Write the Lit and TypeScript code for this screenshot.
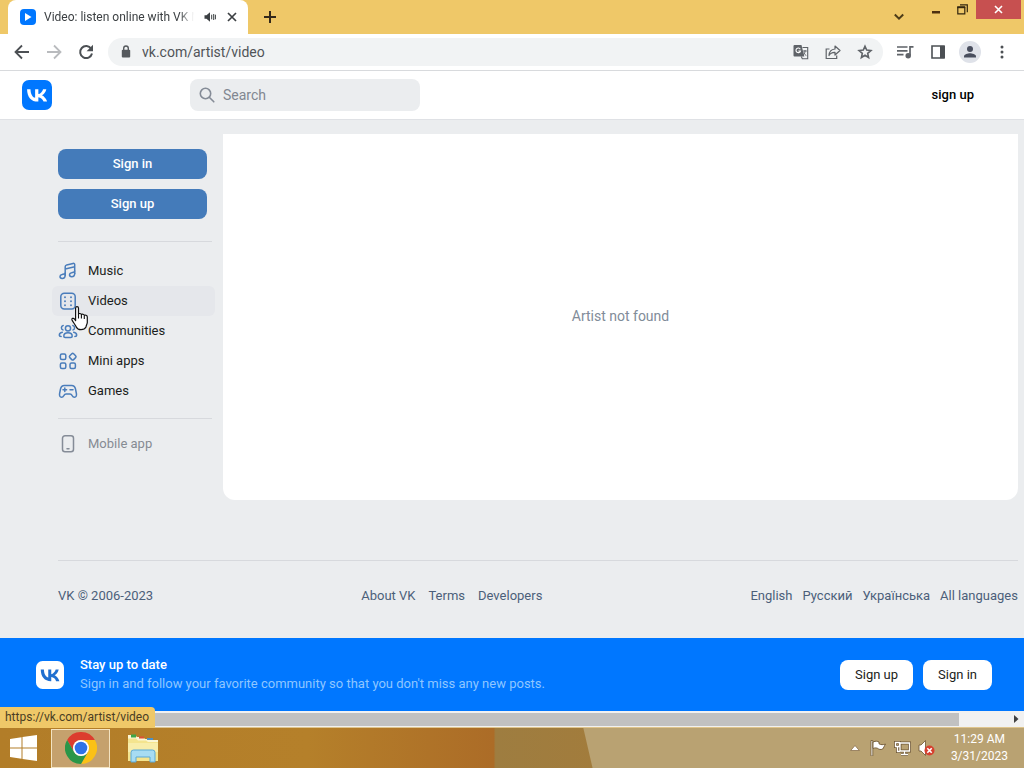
import { LitElement, html, css, svg } from "lit";
import { customElement } from "lit/decorators.js";

const VK_PATH =
  "M12.77 17.29c-5.47 0-8.59-3.75-8.72-9.99h2.74c.09 4.58 2.11 6.52 3.71 6.92V7.3h2.58v3.95c1.58-.17 3.24-1.97 3.8-3.95h2.58c-.43 2.44-2.23 4.24-3.51 4.98 1.28.6 3.33 2.17 4.11 5.01h-2.84c-.61-1.9-2.13-3.37-4.14-3.57v3.57h-.31z";

const vkLogo = (size: number, bg: string, fg: string) => html`
  <svg width=${size} height=${size} viewBox="0 0 24 24" aria-hidden="true">
    <rect width="24" height="24" rx="5.6" fill=${bg}></rect>
    <path d=${VK_PATH} fill=${fg}></path>
  </svg>`;

const base = css`
  *, *::before, *::after { box-sizing: border-box; }
  svg { display: block; flex: none; }
  button { font: inherit; color: inherit; border: 0; padding: 0; margin: 0; background: none; cursor: pointer; }
  a { color: inherit; text-decoration: none; }
`;

@customElement("browser-chrome")
export class BrowserChrome extends LitElement {
  static styles = [base, css`
    :host { display: block; font-family: Roboto, "Noto Sans", sans-serif; color: #3c4043; }
    .tabs { display: flex; height: 34px; background: #efc868; padding-left: 8px; }
    .tab { display: flex; align-items: center; width: 240px; background: #fff; border-radius: 8px 8px 0 0; padding: 0 8px 0 12px; font-size: 12px; }
    .title { flex: 1; min-width: 0; margin: 0 10px 0 8px; overflow: hidden; white-space: nowrap; -webkit-mask-image: linear-gradient(90deg, #000 90%, transparent); mask-image: linear-gradient(90deg, #000 90%, transparent); }
    .close { margin-left: 8px; }
    .new { padding: 0 16px; display: flex; align-items: center; }
    .window { margin-left: auto; display: flex; align-items: flex-start; }
    .window button { display: flex; align-items: center; justify-content: center; height: 19px; width: 26px; }
    .window .list { height: 34px; width: 32px; margin-right: 8px; }
    .window .x { width: 45px; background: #c75050; margin-right: 3px; margin-left: 1px; }
    .bar { display: flex; align-items: center; height: 37px; background: #fff; border-bottom: 1px solid #d8dadd; padding: 0 14px; color: #5f6368; }
    .bar > button { margin-right: 16px; }
    .omni { flex: 1; display: flex; align-items: center; height: 28px; border-radius: 14px; background: #f1f3f4; padding: 0 10px; margin: 0 14px 0 -2px; }
    .url { flex: 1; min-width: 0; border: 0; outline: 0; background: none; font: 14px/20px Roboto, sans-serif; color: #505458; margin-left: 8px; padding: 0; }
    .omni button { margin-left: 16px; }
    .bar > .ext { margin: 0 0 0 16px; }
    .bar > .ext.first { margin-left: 0; }
    .bar > .me { margin-left: 13px; }
    .bar > .dots { margin-left: 13px; }
  `];

  render() {
    return html`
      <div class="tabs">
        <div class="tab">
          <svg width="16" height="16" viewBox="0 0 16 16"><rect width="16" height="16" rx="4" fill="#0077ff"/><path d="M5 4v8l6.500-4z" fill="#fff"/></svg>
          <span class="title">Video: listen online with VK Music</span>
          <svg width="12" height="12" viewBox="0 0 12 12" fill="#3c4043"><path d="M0.500 4.200h2L6 1.200v9.600L2.500 7.800h-2z"/><path d="M7.700 3.700v4.600M9.700 3v6M11.400 3.700v4.600" stroke="#3c4043"/></svg>
          <button class="close" aria-label="Close tab"><svg width="16" height="16" viewBox="0 0 16 16" stroke="#3c4043" stroke-width="1.700"><path d="M4 4l8 8M12 4l-8 8"/></svg></button>
        </div>
        <button class="new" aria-label="New tab"><svg width="12" height="12" viewBox="0 0 12 12" stroke="#33291a" stroke-width="2"><path d="M6 0v12M0 6h12"/></svg></button>
        <div class="window">
          <button class="list" aria-label="Search tabs"><svg width="10" height="8" viewBox="0 0 10 8" fill="none" stroke="#4d3c18" stroke-width="2"><path d="M.8 1.500L5 5.700l4.200-4.200"/></svg></button>
          <button aria-label="Minimize"><svg width="8" height="14" viewBox="0 0 8 14"><path d="M0 8h8v2.500H0z" fill="#4d3011"/></svg></button>
          <button aria-label="Restore"><svg width="11" height="11" viewBox="0 0 11 11" fill="none" stroke="#33260f" stroke-width="1.200"><path d="M.8 3.500h7v6.300h-7z"/><path d="M.2 3.200h8" stroke-width="2"/><path d="M3 .9h7.300v7.300"/></svg></button>
          <button class="x" aria-label="Close"><svg width="9" height="9" viewBox="0 0 9 9" stroke="#fff" stroke-width="1.600"><path d="M1 1l7 7M8 1L1 8"/></svg></button>
        </div>
      </div>
      <div class="bar">
        <button aria-label="Back"><svg width="16" height="16" viewBox="0 0 16 16" fill="none" stroke="#4c5054" stroke-width="1.800"><path d="M15 8H2M8 1.500L1.500 8 8 14.500"/></svg></button>
        <button aria-label="Forward"><svg width="16" height="16" viewBox="0 0 16 16" fill="none" stroke="#b9bbbe" stroke-width="1.800"><path d="M1 8h13M8 1.500L14.500 8 8 14.500"/></svg></button>
        <button aria-label="Reload"><svg width="16" height="16" viewBox="0 0 16 16" fill="none" stroke="#4c5054" stroke-width="2"><path d="M13.200 4.800A6 6 0 1 0 14 9.500"/><path d="M15 .8v6.400H8.600z" fill="#4c5054" stroke="none"/></svg></button>
        <div class="omni">
          <svg width="16" height="16" viewBox="0 0 16 16"><rect x="3.800" y="5.800" width="8.400" height="7.600" rx="1" fill="#55595d"/><path d="M5.700 6.500V4.300a2.300 2.300 0 0 1 4.600 0v2.200" fill="none" stroke="#55595d" stroke-width="1.400"/></svg>
          <input class="url" aria-label="Address" .value=${"vk.com/artist/video"} />
          <button aria-label="Translate"><svg width="16" height="16" viewBox="0 0 16 16"><path d="M1.500 1h7l2.800 11.500H1.500A1 1 0 0 1 .5 11.500V2a1 1 0 0 1 1-1z" fill="#5f6368"/><path d="M9.500 3.500h5.200v11.300H9.300l-1-2.300" fill="none" stroke="#5f6368" stroke-width="1.100"/><path d="M7.300 5.200A2.300 2.300 0 1 0 7.500 7H5.300" fill="none" stroke="#fff" stroke-width="1.100"/><path d="M9.800 7h4M12 6v1c0 2-1 3.500-2 4M10.800 8.500c.5 1.500 1.500 2.500 2.500 3" fill="none" stroke="#5f6368"/></svg></button>
          <button aria-label="Share"><svg width="16" height="16" viewBox="0 0 16 16" fill="none" stroke="#5f6368" stroke-width="1.200"><path d="M4.500 5H1.200v9.500h10.500v-3"/><path d="M10 5V2l5 4.500-5 4.500V8.300C7 8.200 5 9.500 4 11.500 4.200 7.500 6.500 5.300 10 5z" stroke-linejoin="round"/></svg></button>
          <button aria-label="Bookmark"><svg width="16" height="16" viewBox="0 0 16 16" fill="none" stroke="#5f6368" stroke-width="1.600"><path d="M8 2.200l1.700 3.900 4.200.4-3.200 2.800.9 4.200L8 11.300l-3.600 2.200.9-4.200-3.200-2.800 4.200-.4z"/></svg></button>
        </div>
        <button class="ext first" aria-label="Media"><svg width="17" height="16" viewBox="0 0 17 16" fill="none" stroke="#5f6368" stroke-width="1.700"><path d="M0 3h10.500M0 6.800h10.500M0 10.600h6.500M13 11.500V2.800h3.500"/><circle cx="11.200" cy="11.800" r="1.900" fill="#5f6368"/></svg></button>
        <button class="ext" aria-label="Side panel"><svg width="16" height="16" viewBox="0 0 16 16"><path d="M2 2h12v12H2z" fill="none" stroke="#4c5054" stroke-width="1.600"/><path d="M10 2h5v12h-5z" fill="#4c5054"/></svg></button>
        <button class="ext me" aria-label="Profile"><svg width="22" height="22" viewBox="0 0 22 22"><circle cx="11" cy="11" r="11" fill="#dfe2e9"/><circle cx="11" cy="8" r="3" fill="#494e5e"/><path d="M5 16.500v-1.300c0-2 4-3 6-3s6 1 6 3v1.300z" fill="#494e5e"/></svg></button>
        <button class="ext dots" aria-label="Menu"><svg width="16" height="16" viewBox="0 0 16 16" fill="#4c5054"><circle cx="8" cy="3" r="1.500"/><circle cx="8" cy="8" r="1.500"/><circle cx="8" cy="13" r="1.500"/></svg></button>
      </div>`;
  }
}

const navItems = [
  { label: "Music", icon: svg`<path d="M7.200 14.200V5.800c0-1 .5-1.600 1.500-1.900l6.300-1.500c1-.2 1.700.2 1.700 1.200v9M7.200 8l9.500-2.300"/><path d="M7.200 14c0 2-1.200 3.500-3 3.500-1.300 0-2.200-.8-2.200-1.900 0-1.200.8-1.900 2-2.100l2-.4c.8-.1 1.200-.5 1.200-1.200M16.700 12.200c0 2-1.200 3.500-3 3.500-1.300 0-2.200-.8-2.200-1.900 0-1.200.8-1.900 2-2.100l2-.4c.8-.1 1.200-.5 1.200-1.200"/>` },
  { label: "Videos", icon: svg`<rect x="2.800" y="2.300" width="14.400" height="15.800" rx="3.500"/><path d="M7 6.200v.1M7 10.200v.1M7 14.200v.1M13 6.200v.1M13 10.200v.1M13 14.200v.1" stroke-width="1.900"/>` },
  { label: "Communities", icon: svg`<circle cx="10" cy="7.300" r="2.600"/><path d="M5.800 15.200c0-2 1.800-3.400 4.200-3.400s4.200 1.400 4.200 3.400c0 .9-.6 1.200-1.400 1.200H7.200c-.8 0-1.400-.3-1.400-1.200zM5.200 4.500a2.300 2.300 0 0 0-.3 4.400M14.800 4.500a2.300 2.300 0 0 1 .3 4.400M4.300 11.300c-2 .3-3 1.500-3 3 0 .8.600 1.200 1.800 1.200M15.700 11.300c2 .3 3 1.500 3 3 0 .8-.6 1.200-1.800 1.200"/>` },
  { label: "Mini apps", icon: svg`<rect x="2.400" y="3" width="5.400" height="5.400" rx="1.500"/><rect x="2.400" y="12" width="5.400" height="5.400" rx="1.500"/><rect x="12" y="12" width="5.400" height="5.400" rx="1.500"/><rect x="12" y="3" width="5.400" height="5.400" rx="1.300" transform="rotate(45 14.700 5.700)"/>` },
  { label: "Games", icon: svg`<path d="M6.300 4.500h7.400c2.300 0 3.300 1.300 3.800 3.500l.9 4.500c.4 2.200-.4 3.800-1.900 3.800-1.200 0-1.900-.8-2.500-1.900-.5-1-1-1.400-2-1.400H8c-1 0-1.500.4-2 1.400-.6 1.100-1.300 1.900-2.500 1.900-1.500 0-2.300-1.600-1.900-3.800L2.500 8c.5-2.200 1.500-3.500 3.800-3.500z"/><path d="M6.800 7v3.600M5 8.800h3.600M12 8.800h3"/>` },
];

@customElement("vk-page")
export class VkPage extends LitElement {
  static styles = [base, css`
    :host { display: flex; flex-direction: column; flex: 1; background: #ebedef; font: 13px/18px Roboto, sans-serif; color: #1b1d20; }
    header { display: flex; align-items: center; height: 49px; background: #fff; border-bottom: 1px solid #dfe1e5; padding: 0 50px 0 22px; }
    .search { display: flex; align-items: center; gap: 8px; width: 230px; height: 32px; margin-left: 138px; padding: 0 9px; border-radius: 8px; background: #ebedef; }
    .search input { flex: 1; min-width: 0; border: 0; outline: 0; padding: 0; background: none; font: 14px/20px Roboto, sans-serif; }
    .search input::placeholder { color: #818791; opacity: 1; }
    header .up { margin-left: auto; font-weight: 500; color: #000; }
    .body { display: grid; grid-template-columns: 163px 1fr; column-gap: 8px; padding: 14px 6px 0 52px; }
    .auth { display: flex; flex-direction: column; gap: 10px; padding: 15px 8px 22px 6px; }
    .auth button { height: 30px; border-radius: 8px; background: #447bba; color: #fff; font-weight: 500; }
    hr { margin: 0 3px 0 6px; border: 0; border-top: 1px solid #d7d9dd; }
    nav { display: flex; flex-direction: column; padding: 14px 0 12px; }
    .item { display: flex; align-items: center; gap: 10px; height: 30px; padding-left: 6px; border-radius: 6px; }
    .item svg { fill: none; stroke: #4a7dbb; stroke-width: 1.5; stroke-linecap: round; }
    .item.on { background: #e5e7eb; }
    .item.mobile { color: #868b93; margin-top: 10px; }
    .item.mobile svg { stroke: #858c97; }
    main { display: flex; align-items: center; justify-content: center; min-height: 366px; padding-bottom: 2px; background: #fff; border-radius: 0 0 12px 12px; font-size: 14px; color: #818c99; }
    footer { display: flex; justify-content: space-between; margin: 60px 6px 0 58px; padding: 26px 0 33px; border-top: 1px solid #d7d9dd; color: #4b5f7a; }
    .links { display: flex; gap: 13px; }
    .langs { display: flex; gap: 10px; }
    .promo { display: flex; align-items: center; gap: 10px; margin-top: auto; height: 73px; background: #0077ff; padding: 0 32px 0 36px; color: #fff; }
    .copy { flex: 1; margin-left: 6px; padding-bottom: 2px; line-height: 19px; }
    .copy strong { display: block; font-weight: 500; }
    .copy span { color: #8fc6ff; }
    .promo button { height: 30px; padding: 0 15px; border-radius: 8px; background: #fff; color: #1b1d20; }
  `];

  render() {
    return html`
      <header>
        <a href="#" aria-label="VK">${vkLogo(30, "#0077ff", "#fff")}</a>
        <label class="search">
          <svg width="16" height="16" viewBox="0 0 16 16" fill="none" stroke="#858c97" stroke-width="1.600" stroke-linecap="round"><circle cx="6.500" cy="6.500" r="5.200"/><path d="M10.500 10.500l4.300 4.300"/></svg>
          <input type="search" placeholder="Search" aria-label="Search" />
        </label>
        <a class="up" href="#">sign up</a>
      </header>
      <div class="body">
        <aside>
          <div class="auth"><button>Sign in</button><button>Sign up</button></div>
          <hr />
          <nav>
            ${navItems.map((n) => html`
              <a class="item ${n.label === "Videos" ? "on" : ""}" href="#"><svg width="20" height="20" viewBox="0 0 20 20">${n.icon}</svg>${n.label}</a>`)}
          </nav>
          <hr />
          <a class="item mobile" href="#"><svg width="20" height="20" viewBox="0 0 20 20"><rect x="4.500" y="1.800" width="11" height="16" rx="2.500"/><path d="M9 14.800h2"/></svg>Mobile app</a>
        </aside>
        <main>Artist not found</main>
      </div>
      <footer>
        <span>VK © 2006-2023</span>
        <div class="links"><a href="#">About VK</a><a href="#">Terms</a><a href="#">Developers</a></div>
        <div class="langs"><a href="#">English</a><a href="#">Русский</a><a href="#">Українська</a><a href="#">All languages</a></div>
      </footer>
      <section class="promo">
        ${vkLogo(28, "#fff", "#1f6fd0")}
        <div class="copy"><strong>Stay up to date</strong><span>Sign in and follow your favorite community so that you don't miss any new posts.</span></div>
        <button>Sign up</button><button>Sign in</button>
      </section>`;
  }
}

@customElement("task-bar")
export class TaskBar extends LitElement {
  static styles = [base, css`
    :host { display: flex; align-items: center; height: 40px; color: #fff; font: 12px/17px Roboto, sans-serif;
      background: linear-gradient(77deg, transparent 57.3%, #b9a272 57.4%), linear-gradient(90deg, #b27d28 0, #b5802a 30%, #ac6c27 48.2%, #9e7d40 48.4%, #a27c3c 58%); }
    button { display: flex; align-items: center; justify-content: center; height: 40px; }
    .start { width: 51px; padding-right: 4px; }
    .chrome { width: 59px; height: 39px; border: 1px solid #f3e3c2; background: #c5a16d; }
    .files { width: 66px; }
    .tray { margin-left: auto; display: flex; align-items: center; }
    .tray button { width: 24px; }
    time { text-align: center; margin: 0 16px 0 12px; }
  `];

  render() {
    return html`
      <button class="start" aria-label="Start"><svg width="27" height="26" viewBox="0 0 27 26" fill="#fff"><path d="M0 4l11.500-1.800v10.300H0zM12.500 2L27 0v12.500H12.500zM0 13.500h11.500v10.300L0 22zM12.500 13.500H27V26l-14.500-2z"/></svg></button>
      <button class="chrome" aria-label="Google Chrome">
        <svg width="32" height="32" viewBox="0 0 32 32">
          <path d="M2.140 8A16 16 0 0 1 29.860 8H16a8 8 0 0 0-6.930 12z" fill="#dc3d2e"/>
          <path d="M29.860 8A16 16 0 0 1 16 32l6.930-12A8 8 0 0 0 16 8z" fill="#fbc116"/>
          <path d="M16 32A16 16 0 0 1 2.140 8l6.930 12a8 8 0 0 0 13.860 0z" fill="#2a9648"/>
          <circle cx="16" cy="16" r="8" fill="#fff"/><circle cx="16" cy="16" r="6.300" fill="#2f72e8"/>
        </svg>
      </button>
      <button class="files" aria-label="File Explorer">
        <svg width="32" height="30" viewBox="0 0 32 30">
          <path d="M1 2h7l2 2h6l2 2h6l2 1h5v9H1z" fill="#fbf6d4"/>
          <path d="M4 1.500h5v3H4z" fill="#3da648"/><path d="M12 3.500h5v2h-5z" fill="#dc5136"/><path d="M20 5h6v2h-6z" fill="#4b91c9"/>
          <path d="M1 5.500h8l2 2h8l2 1.500h10v19H1z" fill="#f4e48e"/>
          <path d="M1 10h30v9H1z" fill="#f8edaa"/>
          <path d="M4 29V19.500a2.500 2.500 0 0 1 2.500-2.500h19a2.500 2.500 0 0 1 2.500 2.500V29h-5v-5H9v5z" fill="#a7dcf3" stroke="#5ba9d6"/>
        </svg>
      </button>
      <div class="tray">
        <button aria-label="Show hidden icons"><svg width="10" height="6" viewBox="0 0 10 6"><path d="M5 .5l4.300 5H.7z" fill="#fff" stroke="#806440" stroke-width=".7"/></svg></button>
        <button aria-label="Action Center"><svg width="17" height="16" viewBox="0 0 17 16"><path d="M1 .5h1.800V16H1z" fill="#fff" stroke="#6c5430" stroke-width=".8"/><path d="M3 2c3-1.300 4.500-.8 6 0v1.800c2 1.200 4 1 6.500.3-1.500 2-1.500 3.500-3 5-1.800.8-3.500.4-5-.8-1.800-.7-3-.4-4.500.2z" fill="#fff" stroke="#6c5430" stroke-width=".9"/></svg></button>
        <button aria-label="Network"><svg width="17" height="16" viewBox="0 0 17 16" fill="none"><g stroke="#6c5430" stroke-width="3"><path d="M6 3h9.500v8H6zM10.500 11v3.500M7 14.500h7M1.500 2.500h4v4h-4zM3.500 6.500v5H6"/></g><g stroke="#fff" stroke-width="1.400"><path d="M6 3h9.500v8H6zM10.500 11v3.500M7 14.500h7M1.500 2.500h4v4h-4zM3.500 6.500v5H6"/></g></svg></button>
        <button aria-label="Volume muted"><svg width="17" height="16" viewBox="0 0 17 16"><path d="M1 5h2l4.500-4.500v15L3 11H1z" fill="#fff" stroke="#6c5430" stroke-width=".8"/><circle cx="11.500" cy="10.500" r="5" fill="#d6402f"/><path d="M9.300 8.300l4.400 4.400M13.700 8.300l-4.400 4.400" stroke="#fff" stroke-width="1.600"/></svg></button>
        <time datetime="2023-03-31T11:29">11:29 AM<br />3/31/2023</time>
      </div>`;
  }
}

@customElement("app-root")
export class AppRoot extends LitElement {
  static styles = [base, css`
    :host { display: flex; flex-direction: column; min-height: 100vh; position: relative; }
    .scroll { position: relative; display: flex; align-items: center; height: 17px; background: #f1f1f1; border-bottom: 1px solid #dfc58d; padding-right: 5px; }
    .track { flex: 1; margin-right: 55px; height: 13px; background: #c1c1c1; }
    .status { position: absolute; left: 0; bottom: -1px; height: 21px; padding: 0 6px 0 5px; background: #efc868; border-radius: 0 4px 0 0; font: 12px/21px Roboto, sans-serif; color: #4a3d24; }
    .pointer { position: absolute; left: 71px; top: 306px; pointer-events: none; }
  `];

  render() {
    return html`
      <browser-chrome></browser-chrome>
      <vk-page></vk-page>
      <div class="scroll">
        <div class="track"></div>
        <svg width="5" height="8" viewBox="0 0 5 8"><path d="M0 0l4.500 4L0 8z" fill="#404040"/></svg>
        <div class="status">https://vk.com/artist/video</div>
      </div>
      <task-bar></task-bar>
      <svg class="pointer" width="18" height="25" viewBox="0 0 18 25"><path d="M4.600 2.200c0-1 .6-1.500 1.400-1.500s1.500.6 1.500 1.500v6c.2-1 2.700-1 2.900.6.500-1 2.700-.7 2.900.7.600-.8 3-.5 3 1.500v5.500c0 1.500-1.200 3-1.300 4.500-1 2-3 2.700-5 2.700-2.200 0-4-1-4.700-2.700-.6-1.500-3.300-5-4.300-7-.6-1.500 1.400-2.500 2.600-.8l1 1.500z" fill="#fff" stroke="#111" stroke-width="1.200" stroke-linejoin="round"/><path d="M7.500 8v4.500M10.400 9v3.500M13.300 10v3" stroke="#111" stroke-width="1.100"/></svg>`;
  }
}
